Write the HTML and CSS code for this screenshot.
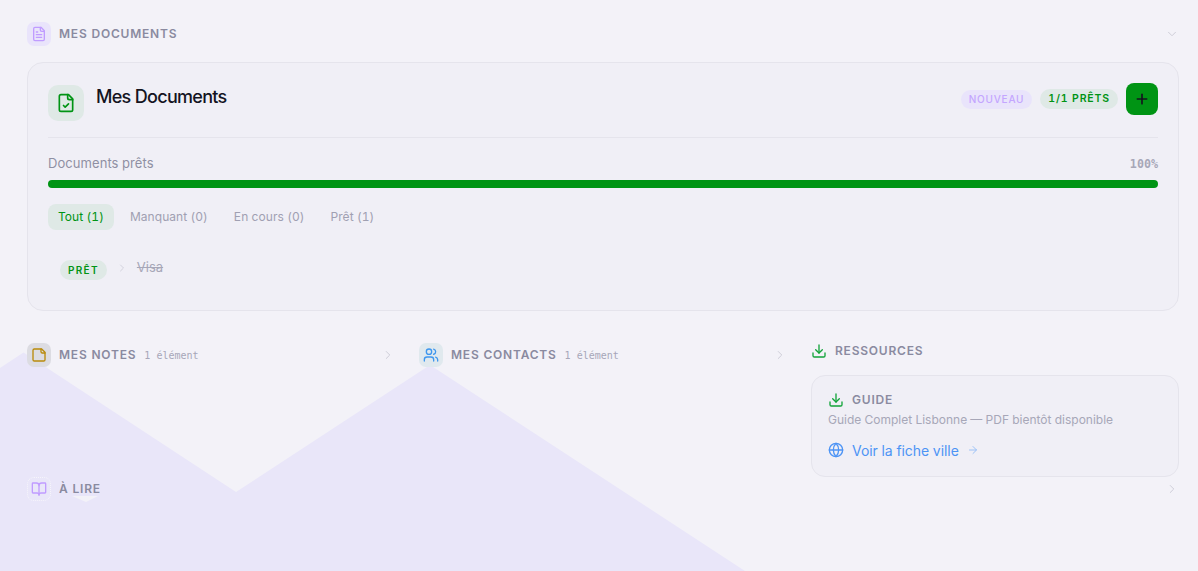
FILE: index.html
```html
<!DOCTYPE html>
<html lang="fr">
<head>
    <meta charset="UTF-8">
    <meta name="viewport" content="width=device-width, initial-scale=1.0">
    <title>Mes Documents</title>
    <link rel="stylesheet" href="styles.css">
</head>
<body>
    <svg class="backdrop" viewBox="0 0 1198 571" width="1198" height="571">
        <polygon fill="#e9e6f9" points="0,368 23.5,352.6 236,492 430,365 745,571 0,571"/>
        <polygon fill="#f3f2f8" points="72,496 98,496 86,502"/>
    </svg>

    <main class="page">
        <div class="section-head">
            <span class="head-icon tint-purple">
                <svg class="ico" viewBox="0 0 24 24"><path d="M15 2H6a2 2 0 0 0-2 2v16a2 2 0 0 0 2 2h12a2 2 0 0 0 2-2V7Z"/><path d="M14 2v4a2 2 0 0 0 2 2h4"/><path d="M10 9H8"/><path d="M16 13H8"/><path d="M16 17H8"/></svg>
            </span>
            <span class="head-label">Mes Documents</span>
            <svg class="chev" viewBox="0 0 24 24"><path d="m6 9 6 6 6-6"/></svg>
        </div>

        <section class="doc-card">
            <div class="doc-top">
                <span class="doc-icon">
                    <svg class="ico-20" viewBox="0 0 24 24"><path d="M15 2H6a2 2 0 0 0-2 2v16a2 2 0 0 0 2 2h12a2 2 0 0 0 2-2V7Z"/><path d="M14 2v4a2 2 0 0 0 2 2h4"/><path d="m9 15 2 2 4-4"/></svg>
                </span>
                <h1 class="doc-title">Mes Documents</h1>
                <div class="doc-actions">
                    <span class="pill pill-new">Nouveau</span>
                    <span class="pill pill-ok">1/1 prêts</span>
                    <button class="add-btn">
                        <svg class="ico-plus" viewBox="0 0 24 24"><path d="M5 12h14"/><path d="M12 5v14"/></svg>
                    </button>
                </div>
            </div>

            <div class="progress-row">
                <span>Documents prêts</span>
                <span class="progress-num">100%</span>
            </div>
            <div class="bar"></div>

            <div class="tabs">
                <span class="tab active">Tout (1)</span>
                <span class="tab">Manquant (0)</span>
                <span class="tab">En cours (0)</span>
                <span class="tab">Prêt (1)</span>
            </div>

            <div class="doc-line">
                <span class="pill pill-status">Prêt</span>
                <svg class="chev-sm" viewBox="0 0 24 24"><path d="m9 18 6-6-6-6"/></svg>
                <span class="doc-name">Visa</span>
            </div>
        </section>

        <div class="columns">
            <div class="col-row">
                <span class="head-icon tint-grey">
                    <svg class="ico amber" viewBox="0 0 24 24"><path d="M16 3H5a2 2 0 0 0-2 2v14a2 2 0 0 0 2 2h14a2 2 0 0 0 2-2V8Z"/><path d="M15 3v4a2 2 0 0 0 2 2h4"/></svg>
                </span>
                <span class="head-label">Mes Notes</span>
                <span class="count">1 élément</span>
                <svg class="chev" viewBox="0 0 24 24"><path d="m9 18 6-6-6-6"/></svg>
            </div>

            <div class="col-row">
                <span class="head-icon tint-teal">
                    <svg class="ico blue" viewBox="0 0 24 24"><path d="M16 21v-2a4 4 0 0 0-4-4H6a4 4 0 0 0-4 4v2"/><circle cx="9" cy="7" r="4"/><path d="M22 21v-2a4 4 0 0 0-3-3.87"/><path d="M16 3.13a4 4 0 0 1 0 7.75"/></svg>
                </span>
                <span class="head-label">Mes Contacts</span>
                <span class="count">1 élément</span>
                <svg class="chev" viewBox="0 0 24 24"><path d="m9 18 6-6-6-6"/></svg>
            </div>

            <div class="res-col">
                <div class="res-head">
                    <svg class="ico green" viewBox="0 0 24 24"><path d="M21 15v4a2 2 0 0 1-2 2H5a2 2 0 0 1-2-2v-4"/><path d="m7 10 5 5 5-5"/><path d="M12 15V3"/></svg>
                    <span class="head-label">Ressources</span>
                </div>
                <div class="res-card">
                    <div class="res-title">
                        <svg class="ico green" viewBox="0 0 24 24"><path d="M21 15v4a2 2 0 0 1-2 2H5a2 2 0 0 1-2-2v-4"/><path d="m7 10 5 5 5-5"/><path d="M12 15V3"/></svg>
                        <span class="head-label">Guide</span>
                    </div>
                    <p class="res-desc">Guide Complet Lisbonne — PDF bientôt disponible</p>
                    <a class="res-link">
                        <svg class="ico" viewBox="0 0 24 24"><circle cx="12" cy="12" r="10"/><path d="M12 2a14.5 14.5 0 0 0 0 20 14.5 14.5 0 0 0 0-20"/><path d="M2 12h20"/></svg>
                        <span>Voir la fiche ville</span>
                        <svg class="link-arrow" viewBox="0 0 24 24"><path d="M5 12h14"/><path d="m12 5 7 7-7 7"/></svg>
                    </a>
                </div>
            </div>
        </div>

        <div class="col-row read-row">
            <span class="head-icon tint-ghost">
                <svg class="ico purple" viewBox="0 0 24 24"><path d="M12 7v14"/><path d="M3 18a1 1 0 0 1-1-1V4a1 1 0 0 1 1-1h5a4 4 0 0 1 4 4 4 4 0 0 1 4-4h5a1 1 0 0 1 1 1v13a1 1 0 0 1-1 1h-6a3 3 0 0 0-3 3 3 3 0 0 0-3-3z"/></svg>
            </span>
            <span class="head-label">À lire</span>
            <svg class="chev" viewBox="0 0 24 24"><path d="m9 18 6-6-6-6"/></svg>
        </div>
    </main>
</body>
</html>
```

FILE: styles.css
```css
* { box-sizing: border-box; }
html, body { margin: 0; height: 100%; }
body { background: #f3f2f8; font-family: Inter, "Liberation Sans", sans-serif; color: #8a8aa0; font-variant-numeric: tabular-nums; overflow: hidden; }
svg { fill: none; stroke: currentColor; stroke-width: 2; stroke-linecap: round; stroke-linejoin: round; flex: none; display: block; }
.backdrop { position: absolute; top: 0; left: 0; stroke: none; z-index: -1; }
.page { padding: 22px 19px 0 27px; }

.section-head, .col-row { display: flex; align-items: center; height: 24px; }
.section-head { margin-bottom: 16px; }
.head-icon { width: 24px; height: 24px; border-radius: 7px; display: flex; align-items: center; justify-content: center; margin-right: 8px; flex: none; }
.ico { width: 16px; height: 16px; }
.tint-purple { background: #e9e4fb; color: #c09cff; }
.tint-grey { background: #dcdce2; }
.tint-teal { background: #e0e9ee; }
.tint-ghost { border: 1px dotted #f6f5fb; }
.amber { color: #b98a0a; }
.blue { color: #3f97ee; }
.purple { color: #c09cff; }
.green { color: #12a43a; }
.head-label { margin-bottom: 2px; font-size: 12px; font-weight: 600; letter-spacing: 0.065em; text-transform: uppercase; color: #8a8aa0; white-space: nowrap; }
.chev { width: 14px; height: 14px; margin-left: auto; color: #c8c8d4; stroke-width: 1.5; }

.doc-card { height: 249px; padding: 20px; background: #f0eff6; border: 1px solid #e5e4ec; border-radius: 16px; }
.doc-top { display: flex; height: 55px; border-bottom: 1px solid #e5e4ec; }
.doc-icon { width: 36px; height: 36px; margin-top: 2px; border-radius: 10px; background: #dfe9e6; color: #009414; display: flex; align-items: center; justify-content: center; }
.ico-20 { width: 20px; height: 20px; }
.doc-title { margin: 2px 0 0 12px; font-size: 18px; line-height: 24px; font-weight: 500; letter-spacing: -0.7px; color: #14141f; }
.doc-actions { margin-left: auto; display: flex; align-items: flex-start; gap: 8px; }
.pill { display: inline-block; border-radius: 10px; font-size: 10px; font-weight: 600; letter-spacing: 0.13em; text-transform: uppercase; line-height: 20px; height: 20px; white-space: nowrap; }
.pill-new { margin-top: 7px; height: 19px; line-height: 19px; padding: 0 8px; background: #e9e4fb; color: #c4a6ff; font-weight: 500; letter-spacing: 0.08em; }
.pill-ok { margin-top: 6px; padding: 0 8px; background: #dfe9e6; color: #009414; font-size: 10.5px; letter-spacing: 0.08em; }
.add-btn { width: 32px; height: 32px; padding: 0; border: 0; border-radius: 8px; background: #009414; color: #14141f; display: flex; align-items: center; justify-content: center; }
.ico-plus { width: 16px; height: 16px; stroke-width: 2.5; }

.progress-row { display: flex; justify-content: space-between; align-items: center; height: 18px; margin-top: 16px; font-size: 13px; letter-spacing: 0.005em; color: #8f8fa3; }
.progress-num { margin-top: 2px; font-family: "DejaVu Sans Mono", monospace; font-size: 11.7px; font-weight: 700; letter-spacing: 0; color: #a7a7b8; }
.bar { height: 8px; margin-top: 8px; border-radius: 4px; background: #009414; }

.tabs { display: flex; gap: 6px; margin-top: 16px; }
.tab { height: 26px; line-height: 26px; padding: 0 10px; border-radius: 8px; font-size: 12px; letter-spacing: 0.005em; color: #a0a0b2; white-space: nowrap; }
.tab.active { background: #dfe9e6; color: #009414; }

.doc-line { display: flex; align-items: center; height: 20px; margin-top: 30px; padding-left: 12px; }
.pill-status { padding: 0 8px; background: #dfe9e6; color: #009414; }
.chev-sm { width: 12px; height: 12px; margin: -4px 9px 0 9px; color: #c8c8d4; stroke-width: 1.5; }
.doc-name { font-size: 13px; margin-top: -6px; color: #a7a7b8; text-decoration: line-through; }

.columns { display: grid; grid-template-columns: repeat(3, 368px); gap: 24px; margin-top: 30px; }
.columns > .col-row { margin-top: 2px; }
.count { margin-left: 8px; font-family: "DejaVu Sans Mono", monospace; font-size: 10px; color: #a7a7b8; }
.res-head { display: flex; align-items: center; gap: 8px; height: 20px; }
.res-card { height: 102px; margin-top: 14px; padding: 15px 16px; background: #f0eff6; border: 1px solid #e5e4ec; border-radius: 14px; }
.res-title { display: flex; align-items: center; gap: 8px; height: 16px; margin-top: 1px; }
.res-desc { margin: 3px 0 0; font-size: 12px; line-height: 18px; color: #a7a7b8; white-space: nowrap; }
.res-link { display: flex; align-items: center; gap: 8px; margin-top: 11px; height: 20px; font-size: 14px; letter-spacing: -0.05px; color: #4d94f5; }
.link-arrow { width: 12px; height: 12px; color: #9cc2f7; }
```
